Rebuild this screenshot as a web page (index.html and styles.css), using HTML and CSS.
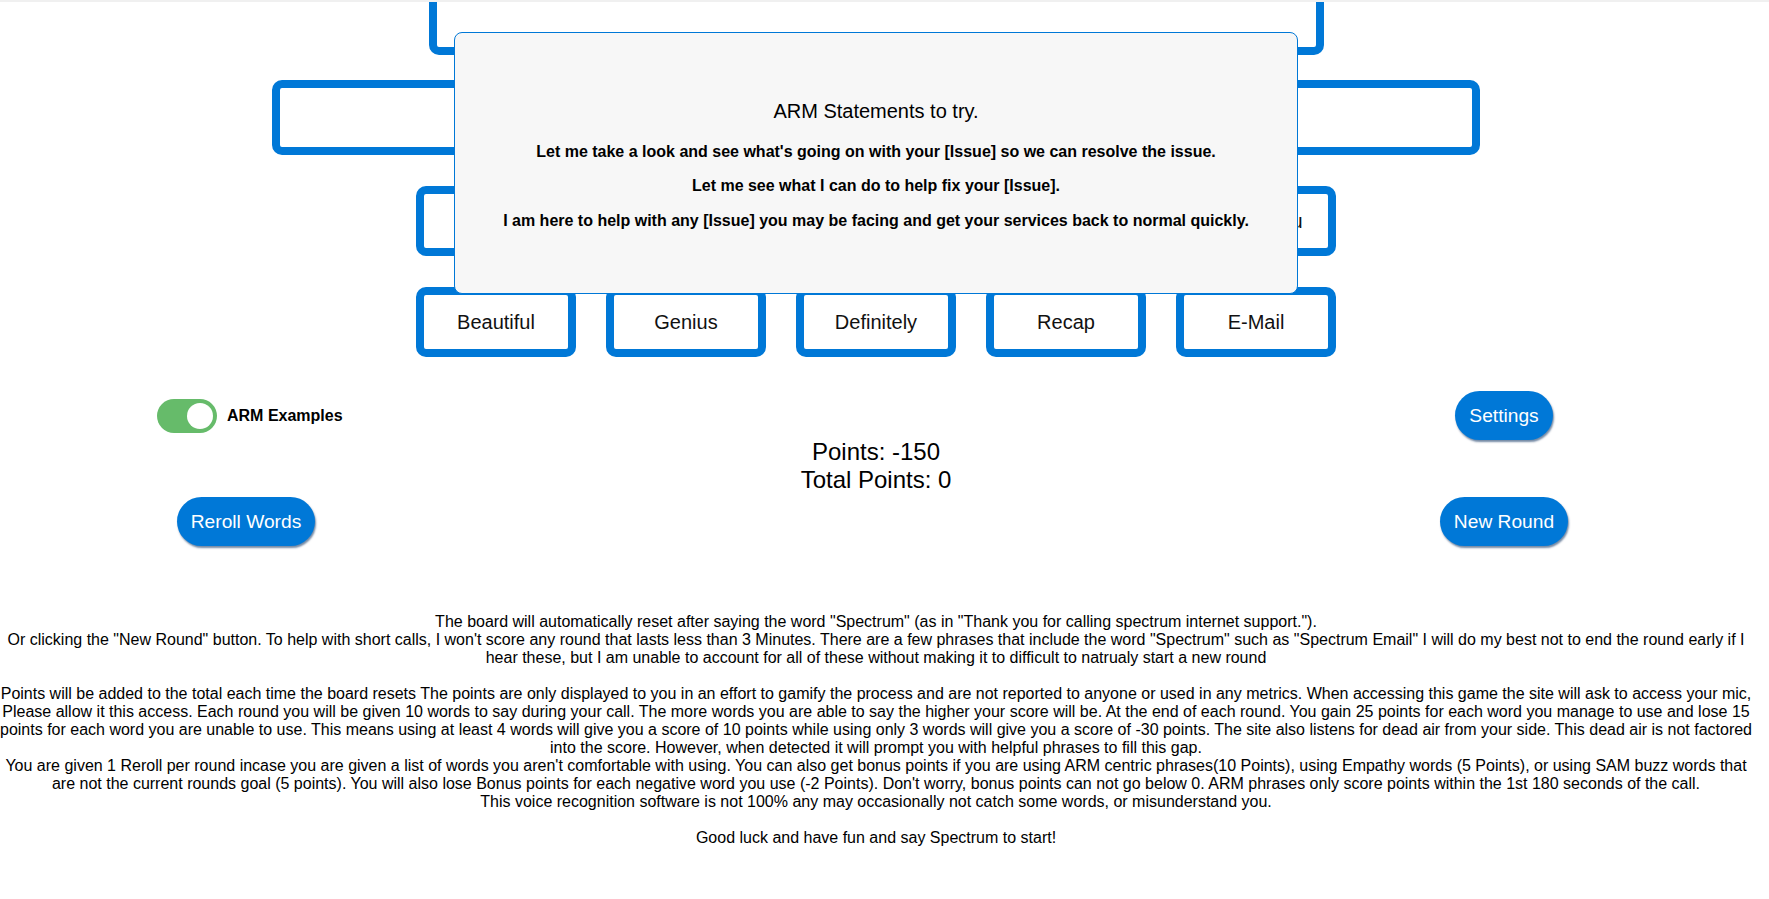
FILE: index.html
```html
<!DOCTYPE html>
<html>
<head>
<meta charset="utf-8">
<title>Spectrum Bingo</title>
<link rel="stylesheet" href="styles.css">
</head>
<body>
<div class="topbar"></div>
<div class="page">
  <div class="board">
    <div class="row"><div class="card card-top"></div></div>
    <div class="row"><div class="card card-wide"></div></div>
    <div class="row">
      <div class="card"></div>
      <div class="card"></div>
      <div class="card"></div>
      <div class="card"></div>
      <div class="card">Thank you</div>
    </div>
    <div class="row">
      <div class="card">Beautiful</div>
      <div class="card">Genius</div>
      <div class="card">Definitely</div>
      <div class="card">Recap</div>
      <div class="card">E-Mail</div>
    </div>
  </div>

  <div class="modal">
    <h3 class="modal-title">ARM Statements to try.</h3>
    <p class="modal-line">Let me take a look and see what's going on with your [Issue] so we can resolve the issue.</p>
    <p class="modal-line">Let me see what I can do to help fix your [Issue].</p>
    <p class="modal-line">I am here to help with any [Issue] you may be facing and get your services back to normal quickly.</p>
  </div>

  <div class="controls">
    <div class="toggle-group">
      <span class="switch"><span class="knob"></span></span>
      <span class="toggle-label">ARM Examples</span>
    </div>
    <div class="right-cell"><button class="btn">Settings</button></div>
    <div class="points">
      <div>Points: -150</div>
      <div>Total Points: 0</div>
    </div>
    <div class="left-cell"><button class="btn">Reroll Words</button></div>
    <div class="right-cell"><button class="btn">New Round</button></div>
  </div>

  <div class="info">The board will automatically reset after saying the word "Spectrum" (as in "Thank you for calling spectrum internet support.").<br>Or clicking the "New Round" button. To help with short calls, I won't score any round that lasts less than 3 Minutes. There are a few phrases that include the word "Spectrum" such as "Spectrum Email" I will do my best not to end the round early if I hear these, but I am unable to account for all of these without making it to difficult to natrualy start a new round<br><br>Points will be added to the total each time the board resets The points are only displayed to you in an effort to gamify the process and are not reported to anyone or used in any metrics. When accessing this game the site will ask to access your mic, Please allow it this access. Each round you will be given 10 words to say during your call. The more words you are able to say the higher your score will be. At the end of each round. You gain 25 points for each word you manage to use and lose 15 points for each word you are unable to use. This means using at least 4 words will give you a score of 10 points while using only 3 words will give you a score of -30 points. The site also listens for dead air from your side. This dead air is not factored into the score. However, when detected it will prompt you with helpful phrases to fill this gap.<br>You are given 1 Reroll per round incase you are given a list of words you aren't comfortable with using. You can also get bonus points if you are using ARM centric phrases(10 Points), using Empathy words (5 Points), or using SAM buzz words that are not the current rounds goal (5 points). You will also lose Bonus points for each negative word you use (-2 Points). Don't worry, bonus points can not go below 0. ARM phrases only score points within the 1st 180 seconds of the call.<br>This voice recognition software is not 100% any may occasionally not catch some words, or misunderstand you.<br><br>Good luck and have fun and say Spectrum to start!</div>
</div>
</body>
</html>
```

FILE: styles.css
```css
html, body {
  margin: 0;
  padding: 0;
  background: #ffffff;
}

body {
  font-family: "Liberation Sans", Arial, sans-serif;
  color: #000;
}

.topbar {
  height: 2px;
  background: #f0f0f0;
}

.page {
  position: relative;
  width: 1752px;
}

.board {
  overflow: hidden;
  display: flex;
  flex-direction: column;
  align-items: center;
}

.row {
  display: flex;
  justify-content: center;
  gap: 30px;
  margin-top: 31px;
}

.row:first-child {
  margin-top: -25px;
}

.row:nth-child(2) {
  margin-top: 25px;
}

.card {
  box-sizing: border-box;
  width: 160px;
  height: 70px;
  border: 8px solid #0078d7;
  border-radius: 10px;
  background: #fff;
  display: flex;
  align-items: center;
  justify-content: center;
  font-size: 20px;
  color: #111;
}

.card-top {
  width: 895px;
  height: 78px;
}

.card-wide {
  width: 1208px;
  height: 75px;
}

.modal {
  position: absolute;
  top: 30px;
  left: 50%;
  transform: translateX(-50%);
  box-sizing: border-box;
  width: 844px;
  padding: 47px 20px 47px;
  background: #f7f7f7;
  border: 1px solid #0078d7;
  border-radius: 8px;
  text-align: center;
}

.modal-title {
  font-size: 20px;
  font-weight: normal;
  margin: 20px 0;
  line-height: 23px;
}

.modal-line {
  font-size: 16px;
  font-weight: bold;
  margin: 16px 0;
  line-height: 18.4px;
}

.controls {
  display: grid;
  grid-template-columns: 492px 768px 492px;
  grid-template-rows: 49px auto 49px;
  margin-top: 34px;
}

.toggle-group {
  grid-column: 1;
  grid-row: 1;
  display: flex;
  align-items: center;
  gap: 10px;
  margin-left: 157px;
}

.switch {
  position: relative;
  display: block;
  width: 60px;
  height: 34px;
  border-radius: 17px;
  background: #66bb6a;
}

.knob {
  position: absolute;
  top: 4px;
  right: 4px;
  width: 26px;
  height: 26px;
  border-radius: 50%;
  background: #fff;
}

.toggle-label {
  font-size: 16px;
  font-weight: bold;
}

.right-cell {
  grid-column: 3;
  display: flex;
  justify-content: center;
  padding-right: 4px;
}

.left-cell {
  grid-column: 1;
  grid-row: 3;
  display: flex;
  justify-content: center;
}

.controls .right-cell:nth-child(2) {
  grid-row: 1;
}

.controls .right-cell:last-child {
  grid-row: 3;
}

.points {
  grid-column: 2;
  grid-row: 2;
  text-align: center;
  font-size: 24px;
  line-height: 27.6px;
  margin: -2px 0 4px;
}

.btn {
  height: 49px;
  padding: 0 14px;
  border: none;
  border-radius: 25px;
  background: #0078d7;
  color: #fff;
  font-family: "Liberation Sans", Arial, sans-serif;
  font-size: 19.2px;
  box-shadow: 1px 2px 2px rgba(0, 40, 90, 0.55);
  cursor: pointer;
}

.info {
  margin: 67px -6px 0;
  text-align: center;
  font-size: 16px;
  line-height: 18px;
}
```
